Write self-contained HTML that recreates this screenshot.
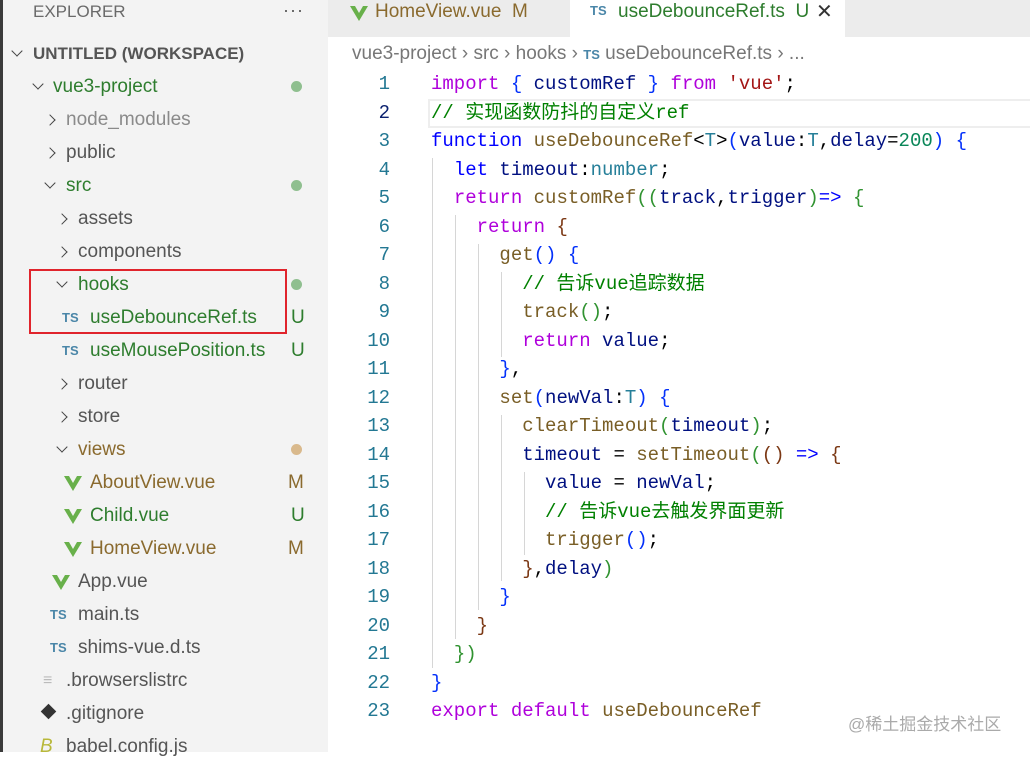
<!DOCTYPE html>
<html><head><meta charset="utf-8"><style>
*{margin:0;padding:0;box-sizing:border-box}
body{width:1030px;height:752px;overflow:hidden;background:#fff;position:relative;font-family:"Liberation Sans","Noto Sans CJK SC",sans-serif}
#side{position:absolute;left:0;top:0;width:328px;height:752px;background:#f3f3f3;border-left:3px solid #3a3a3a}
.r{position:absolute;height:28px;line-height:28px;font-size:19px;color:#555;white-space:nowrap}
.g{color:#2e7d2e}.gr{color:#8a8a8a}.m{color:#8a6a2e}
.ch{position:absolute;width:8px;height:8px;border-right:1.5px solid #444;border-bottom:1.5px solid #444}
.dn{transform:rotate(45deg)}.rt{transform:rotate(-45deg)}
.dot{position:absolute;width:11px;height:11px;border-radius:50%;background:#8fbf8f}
.ts{position:absolute;font-size:13px;font-weight:bold;color:#4a86a8;line-height:28px}
.v{position:absolute;width:0;height:0;border-left:9px solid transparent;border-right:9px solid transparent;border-top:15px solid #68b04a}
.v:after{content:"";position:absolute;left:-4px;top:-15px;border-left:4px solid transparent;border-right:4px solid transparent;border-top:7px solid #f3f3f3}
.st{position:absolute;font-size:19px;line-height:28px}
#tabs{position:absolute;left:328px;top:0;right:0;height:37px;background:#ececec}
#ed{position:absolute;left:328px;top:37px;right:0;bottom:0;background:#fff}
.ln{position:absolute;left:0;width:62px;text-align:right;font-family:"Liberation Mono",monospace;font-size:19px;color:#237893;height:28.5px;line-height:28.5px}
.cl{position:absolute;left:103px;font-family:"Liberation Mono","Noto Sans CJK SC",monospace;font-size:19px;height:28.5px;line-height:28.5px;white-space:pre;color:#001080}
.k{color:#af00db}.b{color:#0000ff}.f{color:#795e26}.t{color:#267f99}.s{color:#a31515}.n{color:#098658}.c{color:#008000}.p{color:#000}.y{color:#0431fa}.q{color:#319331}.o{color:#7b3814}
.gd{position:absolute;width:1px;background:#d6d6d6}
</style></head><body>
<div id="side">
<div class="r" style="left:30px;top:-2px;color:#6a6a6a;font-size:17px">EXPLORER</div>
<div class="r" style="left:280px;top:-4px;color:#555;font-size:18px;letter-spacing:1px">···</div>
<div class="ch dn" style="left:10px;top:47px"></div><div class="r" style="left:30px;top:40px;font-weight:bold;font-size:17px;color:#555">UNTITLED (WORKSPACE)</div>
<div class="ch dn" style="left:31px;top:80px"></div><div class="r g" style="left:50px;top:73px">vue3-project</div><div class="dot" style="left:288px;top:81px"></div>
<div class="ch rt" style="left:43px;top:116px"></div><div class="r gr" style="left:63px;top:106px">node_modules</div>
<div class="ch rt" style="left:43px;top:149px"></div><div class="r" style="left:63px;top:139px">public</div>
<div class="ch dn" style="left:43px;top:179px"></div><div class="r g" style="left:63px;top:172px">src</div><div class="dot" style="left:288px;top:180px"></div>
<div class="ch rt" style="left:55px;top:215px"></div><div class="r" style="left:75px;top:205px">assets</div>
<div class="ch rt" style="left:55px;top:248px"></div><div class="r" style="left:75px;top:238px">components</div>
<div class="ch dn" style="left:55px;top:278px"></div><div class="r g" style="left:75px;top:271px">hooks</div><div class="dot" style="left:288px;top:279px"></div>
<div class="ts" style="left:59px;top:304px">TS</div><div class="r g" style="left:87px;top:304px">useDebounceRef.ts</div><div class="st g" style="left:288px;top:304px">U</div>
<div style="position:absolute;left:26px;top:269px;width:258px;height:65px;border:2px solid #e0242c"></div>
<div class="ts" style="left:59px;top:337px">TS</div><div class="r g" style="left:87px;top:337px">useMousePosition.ts</div><div class="st g" style="left:288px;top:337px">U</div>
<div class="ch rt" style="left:55px;top:380px"></div><div class="r" style="left:75px;top:370px">router</div>
<div class="ch rt" style="left:55px;top:413px"></div><div class="r" style="left:75px;top:403px">store</div>
<div class="ch dn" style="left:55px;top:443px"></div><div class="r m" style="left:75px;top:436px">views</div><div class="dot" style="left:288px;top:444px;background:#d9b98c"></div>
<div class="v" style="left:61px;top:476px"></div><div class="r m" style="left:87px;top:469px">AboutView.vue</div><div class="st m" style="left:285px;top:469px">M</div>
<div class="v" style="left:61px;top:509px"></div><div class="r g" style="left:87px;top:502px">Child.vue</div><div class="st g" style="left:288px;top:502px">U</div>
<div class="v" style="left:61px;top:542px"></div><div class="r m" style="left:87px;top:535px">HomeView.vue</div><div class="st m" style="left:285px;top:535px">M</div>
<div class="v" style="left:49px;top:575px"></div><div class="r" style="left:75px;top:568px">App.vue</div>
<div class="ts" style="left:47px;top:601px">TS</div><div class="r" style="left:75px;top:601px">main.ts</div>
<div class="ts" style="left:47px;top:634px">TS</div><div class="r" style="left:75px;top:634px">shims-vue.d.ts</div>
<div class="r" style="left:40px;top:667px;color:#bbb;font-size:16px">≡</div><div class="r" style="left:63px;top:667px">.browserslistrc</div>
<div style="position:absolute;left:40px;top:706px;width:11px;height:11px;background:#333;transform:rotate(45deg)"></div><div class="r" style="left:63px;top:700px">.gitignore</div>
<div class="r" style="left:37px;top:733px;color:#b8b83a;font-style:italic">B</div><div class="r" style="left:63px;top:733px">babel.config.js</div>
</div>
<div id="tabs">
<div style="position:absolute;left:22px;top:6px;width:0;height:0;border-left:9px solid transparent;border-right:9px solid transparent;border-top:15px solid #68b04a"><div style="position:absolute;left:-4px;top:-15px;border-left:4px solid transparent;border-right:4px solid transparent;border-top:7px solid #ececec"></div></div>
<div class="r m" style="left:47px;top:-1px;height:26px;line-height:26px">HomeView.vue&nbsp;&nbsp;M</div>
<div style="position:absolute;left:242px;top:0;width:275px;height:37px;background:#fff">
<div class="ts" style="left:20px;top:-2px;line-height:26px">TS</div>
<div class="r g" style="left:48px;top:-1px;height:26px;line-height:26px">useDebounceRef.ts&nbsp;&nbsp;U</div>
<div class="r" style="left:246px;top:-1px;height:26px;line-height:26px;color:#333;font-size:20px">✕</div>
</div>
</div>
<div id="ed">
<div class="r" style="left:24px;top:3px;color:#777">vue3-project&nbsp;›&nbsp;src&nbsp;›&nbsp;hooks&nbsp;›&nbsp;<span style="font-size:13px;font-weight:bold;color:#4a86a8">TS</span>&nbsp;useDebounceRef.ts&nbsp;›&nbsp;...</div>
<div style="position:absolute;left:100px;top:62px;right:0;height:29px;border:2px solid #eee;border-right:none"></div>
<div style="position:absolute;top:33px;left:0;right:0">
<div class="ln" style="top:0">1</div><div class="ln" style="top:28.5px;color:#0b216f">2</div><div class="ln" style="top:57px">3</div><div class="ln" style="top:85.5px">4</div><div class="ln" style="top:114px">5</div><div class="ln" style="top:142.5px">6</div><div class="ln" style="top:171px">7</div><div class="ln" style="top:199.5px">8</div><div class="ln" style="top:228px">9</div><div class="ln" style="top:256.5px">10</div><div class="ln" style="top:285px">11</div><div class="ln" style="top:313.5px">12</div><div class="ln" style="top:342px">13</div><div class="ln" style="top:370.5px">14</div><div class="ln" style="top:399px">15</div><div class="ln" style="top:427.5px">16</div><div class="ln" style="top:456px">17</div><div class="ln" style="top:484.5px">18</div><div class="ln" style="top:513px">19</div><div class="ln" style="top:541.5px">20</div><div class="ln" style="top:570px">21</div><div class="ln" style="top:598.5px">22</div><div class="ln" style="top:627px">23</div>
<div class="gd" style="left:104px;top:88px;height:510px"></div>
<div class="gd" style="left:127px;top:145px;height:424px"></div>
<div class="gd" style="left:150px;top:174px;height:366px"></div>
<div class="gd" style="left:173px;top:202px;height:85px"></div>
<div class="gd" style="left:173px;top:345px;height:166px"></div>
<div class="gd" style="left:196px;top:402px;height:83px"></div>
<div class="cl" style="top:0"><span class="k">import</span> <span class="y">{</span> customRef <span class="y">}</span> <span class="k">from</span> <span class="s">'vue'</span><span class="p">;</span></div>
<div class="cl c" style="top:28.5px">// 实现函数防抖的自定义ref</div>
<div class="cl" style="top:57px"><span class="b">function</span> <span class="f">useDebounceRef</span><span class="p">&lt;</span><span class="t">T</span><span class="p">&gt;</span><span class="y">(</span>value<span class="p">:</span><span class="t">T</span><span class="p">,</span>delay<span class="p">=</span><span class="n">200</span><span class="y">)</span> <span class="y">{</span></div>
<div class="cl" style="top:85.5px">  <span class="b">let</span> timeout<span class="p">:</span><span class="t">number</span><span class="p">;</span></div>
<div class="cl" style="top:114px">  <span class="k">return</span> <span class="f">customRef</span><span class="q">((</span>track<span class="p">,</span>trigger<span class="q">)</span><span class="b">=&gt;</span> <span class="q">{</span></div>
<div class="cl" style="top:142.5px">    <span class="k">return</span> <span class="o">{</span></div>
<div class="cl" style="top:171px">      <span class="f">get</span><span class="y">()</span> <span class="y">{</span></div>
<div class="cl c" style="top:199.5px">        // 告诉vue追踪数据</div>
<div class="cl" style="top:228px">        <span class="f">track</span><span class="q">()</span><span class="p">;</span></div>
<div class="cl" style="top:256.5px">        <span class="k">return</span> value<span class="p">;</span></div>
<div class="cl" style="top:285px">      <span class="y">}</span><span class="p">,</span></div>
<div class="cl" style="top:313.5px">      <span class="f">set</span><span class="y">(</span>newVal<span class="p">:</span><span class="t">T</span><span class="y">)</span> <span class="y">{</span></div>
<div class="cl" style="top:342px">        <span class="f">clearTimeout</span><span class="q">(</span>timeout<span class="q">)</span><span class="p">;</span></div>
<div class="cl" style="top:370.5px">        timeout <span class="p">=</span> <span class="f">setTimeout</span><span class="q">(</span><span class="o">()</span> <span class="b">=&gt;</span> <span class="o">{</span></div>
<div class="cl" style="top:399px">          value <span class="p">=</span> newVal<span class="p">;</span></div>
<div class="cl c" style="top:427.5px">          // 告诉vue去触发界面更新</div>
<div class="cl" style="top:456px">          <span class="f">trigger</span><span class="y">()</span><span class="p">;</span></div>
<div class="cl" style="top:484.5px">        <span class="o">}</span><span class="p">,</span>delay<span class="q">)</span></div>
<div class="cl" style="top:513px">      <span class="y">}</span></div>
<div class="cl" style="top:541.5px">    <span class="o">}</span></div>
<div class="cl" style="top:570px">  <span class="q">})</span></div>
<div class="cl" style="top:598.5px"><span class="y">}</span></div>
<div class="cl" style="top:627px"><span class="k">export</span> <span class="k">default</span> <span class="f">useDebounceRef</span></div>
</div>
<div style="position:absolute;left:520px;top:673px;font-size:17px;color:#aaa">@稀土掘金技术社区</div>
</div>
</body></html>
